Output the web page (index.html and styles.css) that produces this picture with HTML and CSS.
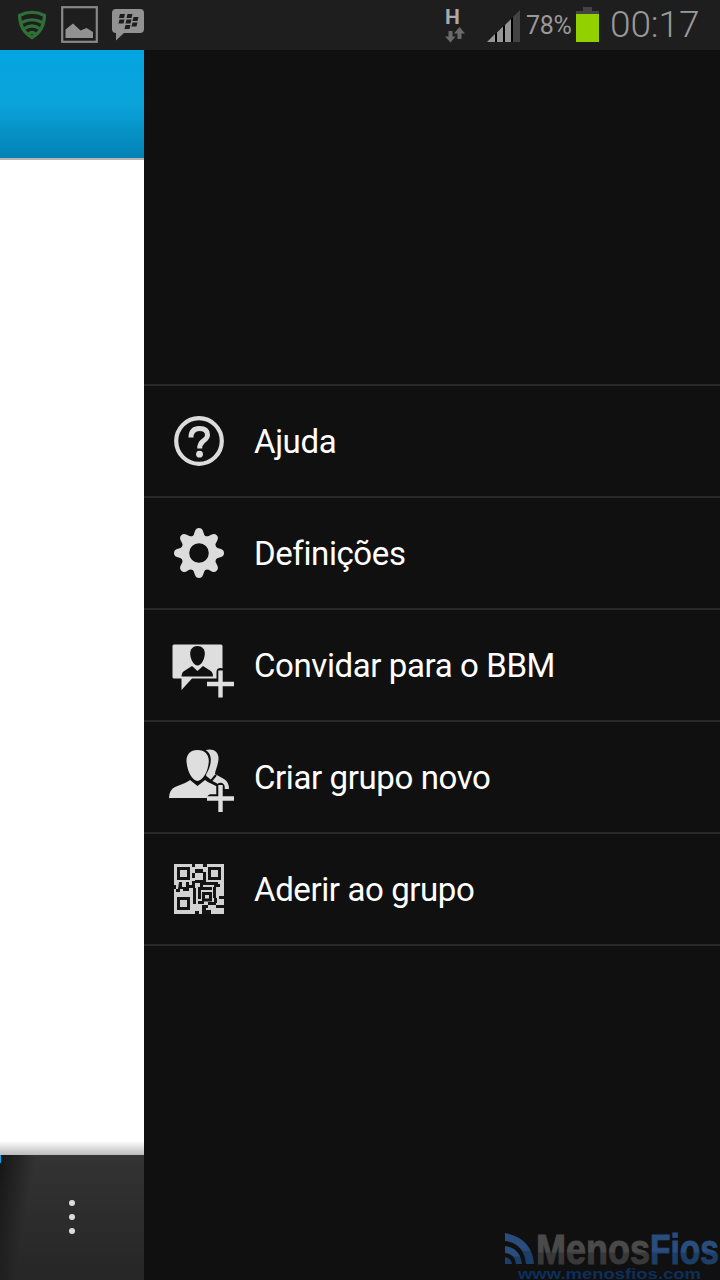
FILE: index.html
```html
<!DOCTYPE html>
<html lang="pt">
<head>
    <meta charset="UTF-8">
    <meta name="viewport" content="width=device-width, initial-scale=1.0">
    <title>BBM</title>
    <link rel="stylesheet" href="styles.css">
</head>
<body>
    <header class="status">
        <svg class="shield" width="30" height="30" viewBox="0 0 30 30" fill="none" stroke="#2f7036" stroke-width="3.200">
            <path d="M2.500 5.500Q15-1 27.500 5.500Q27 21 15 27.500Q3 21 2.500 5.500Z"/>
            <path d="M4.500 12.500Q15 7 25.500 12.500M7.500 18.500Q15 13.500 22.500 18.500M11 24.500Q15 20.500 19 24.500"/>
        </svg>
        <svg class="photo" width="37" height="37" viewBox="0 0 37 37">
            <rect x="1.200" y="1.200" width="34.600" height="34.600" fill="none" stroke="#888" stroke-width="2.200"/>
            <path d="M4.500 32V23.500L12 17.500L19.500 24.500L25.500 22L32 26V32Z" fill="#929292"/>
        </svg>
        <svg class="bbm" width="32" height="32" viewBox="0 0 32 32">
            <path d="M4 0H28Q32 0 32 4V20Q32 24 28 24H12L4 31.500V24Q0 24 0 20V4Q0 0 4 0Z" fill="#929292"/>
            <g fill="#1d1d1d">
                <path d="M8 5h5l-1 4H7zM15.500 5h5l-1 4h-5zM7.500 10.500h5l-1 4h-5zM14.500 10.500h5l-1 4h-5zM13.500 16h5l-1 4h-5zM21.500 8h5l-1 4h-5zM20.500 13.500h5l-1 4h-5z"/>
            </g>
        </svg>

        <div class="network">
            <span>H</span>
            <svg width="20" height="16" viewBox="0 0 20 16" fill="#6a6a6a">
                <path d="M3.500 4H7.500V9.500H10.500L5.500 15.500L0 9.500H3.500Z"/>
                <path d="M12.500 12H16.500V6.500H20L14.500 0L9 6.500H12.500Z"/>
            </svg>
        </div>
        <svg class="signal" width="33" height="32" viewBox="0 0 33 32">
            <path d="M0 32L8 24V32ZM10 32V22.500L16 16.500V32ZM18 32V15L24 9V32Z" fill="#969696"/>
            <path d="M8 24L10 22.500V32H8ZM16 16.500L18 15V32H16ZM24 9L26 7V32H24Z" fill="#000"/>
            <path d="M26 7L33 0V32H26Z" fill="#444"/>
        </svg>
        <span class="percent">78%</span>
        <svg class="battery" width="23" height="35" viewBox="0 0 23 35">
            <path d="M7 0H16V4H23V7H0V4H7Z" fill="#444"/>
            <rect y="7" width="23" height="28" fill="#92d000"/>
        </svg>
        <span class="clock">00:17</span>
    </header>

    <main class="screen">
        <section class="page">
            <div class="title"></div>
            <div class="content"></div>
            <div class="actions">
                <i></i><i></i><i></i>
            </div>
        </section>

        <nav class="drawer">
            <ul class="menu">
                <li>
                    <svg width="70" height="70" viewBox="0 0 70 70">
                        <circle cx="35" cy="35" r="22.800" fill="none" stroke="#dcdcdc" stroke-width="4.200"/>
                        <path d="M27 31.500Q27 22.500 35.500 22.500Q43.500 22.500 43.500 29Q43.500 32 39 35.300Q35.700 38 35.700 42.500" fill="none" stroke="#dcdcdc" stroke-width="5"/>
                        <circle cx="35.500" cy="48.200" r="3.400" fill="#dcdcdc"/>
                    </svg>
                    <span>Ajuda</span>
                </li>
                <li>
                    <svg width="70" height="70" viewBox="0 0 70 70" fill="#dcdcdc">
                        <g transform="translate(35 35)">
                            <path fill-rule="evenodd" d="M-18 0A18 18 0 1 0 18 0A18 18 0 1 0-18 0ZM-9.800 0A9.800 9.800 0 1 1 9.800 0A9.800 9.800 0 1 1-9.800 0Z"/>
                            <g id="teeth">
                                <path id="tooth" d="M-8-15Q-4.500-18-4-22Q-3-25 0-25Q3-25 4-22Q4.500-18 8-15Z"/>
                                <use href="#tooth" transform="rotate(90)"/>
                                <use href="#tooth" transform="rotate(180)"/>
                                <use href="#tooth" transform="rotate(270)"/>
                            </g>
                            <use href="#teeth" transform="rotate(45)"/>
                        </g>
                    </svg>
                    <span>Definições</span>
                </li>
                <li>
                    <svg width="70" height="70" viewBox="0 0 70 70">
                        <path d="M10 14.500H57Q58.500 14.500 58.500 16V48.500H28L17.500 60V48.500H10Q8.500 48.500 8.500 47V16Q8.500 14.500 10 14.500Z" fill="#dedede"/>
                        <path d="M33.500 16C38 16 41 19 40.800 24C40.500 30 37 35.500 33.500 35.500C30 35.500 26.500 30 26.200 24C26 19 29 16 33.500 16Z" fill="#101010"/>
                        <path d="M17.500 46.500Q17.500 42 21 40.500L28 36L33.500 41L39 36L46 40.500Q49 42 49 46.500Z" fill="#101010"/>
                        <path d="M56.500 42V67M47 54H67" stroke="#101010" stroke-width="8" stroke-linecap="round"/>
                        <path d="M56.500 40.500V67.500M43 54H70" stroke="#dedede" stroke-width="4.400"/>
                    </svg>
                    <span>Convidar para o BBM</span>
                </li>
                <li>
                    <svg width="70" height="70" viewBox="0 0 70 70">
                        <g transform="translate(0 -1)">
                            <path d="M42 9C49 7 55 11 54.500 18C54 25 51 30 51 33L60 38Q65 41 65 48H50L40 38V10Z" fill="#dadada"/>
                            <path d="M42 36L47 40L52 34" fill="none" stroke="#101010" stroke-width="2"/>
                            <path d="M34 7.500C41 7 46.500 11 46.800 18C47 26 43 31 42 34L43 37L54 43Q58 46 58 57H4Z" fill="#101010"/>
                            <path d="M33.500 9C41 9 45 14 44.800 20C44.500 31 38 40 33.500 40C29 40 23 31 22.500 20C22.300 14 26 9 33.500 9Z" fill="#dedede"/>
                            <path d="M5 57Q5 49 11 46L21 42Q25 40 26 39L33.500 45L41 39Q43 41 48 43L54 46V57Z" fill="#dedede"/>
                            <path d="M56.500 46V69M47 57.500H67" stroke="#101010" stroke-width="8.500" stroke-linecap="round"/>
                            <path d="M56.500 44V71M43 57.500H70" stroke="#dedede" stroke-width="4.400"/>
                        </g>
                    </svg>
                    <span>Criar grupo novo</span>
                </li>
                <li>
                    <svg width="70" height="70" viewBox="0 0 70 70">
                        <rect x="10" y="10" width="50" height="50" fill="#d2d2d2"/>
                        <g fill="none" stroke="#151515" stroke-width="3">
                            <rect x="14.500" y="14.500" width="10" height="10"/>
                            <rect x="45.500" y="14.500" width="10" height="10"/>
                            <rect x="14.500" y="44.500" width="10" height="10"/>
                            <rect x="39.500" y="39.500" width="7" height="6.500"/>
                        </g>
                        <!-- data modules -->
                        <path fill="#151515" d="M28 10h3v3h-3zM39 10h4v3h-4zM31 15h8v4h-8zM28 19h3v5h-3zM39 18h3v10h12v3H39v5h-3v-7h-5v-3h8zM15 28h3v5h4v-5h3v3h3v-4h3v7h-6v3h-6v-2h-3v3h-4v-3h-3v-4h3v4h2zM29 34h3v16h-3zM34 33h3v12h-3zM36 33h12v3H36zM50 30h6v3h-4v11h-3V33h1zM55 42h5v3h-5zM34 47h6v3h-6zM44 48h8v3h-8zM38 51h6v3h-6zM38 53h4v7h-4zM42 56h5v4h-5zM52 51h8v3h-8zM50 44h3v5h-3zM31 57h4v3h-4z"/>
                    </svg>
                    <span>Aderir ao grupo</span>
                </li>
            </ul>
        </nav>
    </main>

    <!-- watermark over the drawer -->
    <svg class="watermark" width="216" height="52" viewBox="0 0 216 52">
        <defs>
            <linearGradient id="grey" x2="0" y2="1">
                <stop offset="0.550" stop-color="#4a4a4a"/>
                <stop offset="0.600" stop-color="#393939"/>
            </linearGradient>
            <linearGradient id="blue" x2="0" y2="1">
                <stop offset="0.550" stop-color="#294d7c"/>
                <stop offset="0.600" stop-color="#1d3e67"/>
            </linearGradient>
        </defs>
        <path d="M1 5Q28 10 30 36H22Q20 15 1 13Z" fill="url(#blue)"/>
        <path d="M1 18Q16 20 18 36H12Q11 26 1 25Z" fill="url(#blue)"/>
        <path d="M1 29Q7 30 8 36H1Z" fill="#1d3e67"/>
        <text class="brand" x="32" y="35.500" textLength="114" lengthAdjust="spacingAndGlyphs" fill="url(#grey)" stroke="url(#grey)">Menos</text>
        <text class="brand" x="146" y="35.500" textLength="69" lengthAdjust="spacingAndGlyphs" fill="url(#blue)" stroke="url(#blue)">Fios</text>
        <text class="url" x="14" y="50.500" textLength="183" lengthAdjust="spacingAndGlyphs" fill="#0d2f5c">www.menosfios.com</text>
    </svg>
</body>
</html>
```
FILE: styles.css
```css
* {
    box-sizing: border-box;
}

body {
    position: relative;
    display: flex;
    flex-direction: column;
    margin: 0;
    width: 720px;
    height: 1280px;
    overflow: hidden;
    background-color: #101010;
    font-family: Roboto, "Liberation Sans", sans-serif;
}

.status {
    display: flex;
    align-items: center;
    height: 50px;
    padding-left: 17px;
    background-color: #1e1e1e;
    color: #999;
    line-height: 50px;
}

.status svg {
    flex: none;
}

.shield {
    margin-top: -1px;
}

.photo {
    margin: -1px 0 0 14px;
}

.bbm {
    margin-left: 14px;
}

.network {
    display: flex;
    flex-direction: column;
    margin-left: 301px;
    width: 20px;
    font-size: 21px;
    font-weight: bold;
    line-height: 19px;
    color: #aaa;
}

.signal {
    margin: 1px 0 0 22px;
}

.percent {
    margin: 2px 0 0 6px;
    width: 50px;
    font-size: 25px;
    letter-spacing: -0.3px;
}

.battery {
    margin-top: -1px;
}

.clock {
    margin-left: 11px;
    font-size: 37px;
    font-weight: 300;
    letter-spacing: -0.1px;
}

.screen {
    display: flex;
    flex: 1;
}

.page {
    display: flex;
    flex-direction: column;
    width: 144px;
    background-color: #fff;
}

.title {
    height: 110px;
    border-bottom: 2px solid #b5b5b5;
    background: linear-gradient(#03a5e1, #0ba3da 50%, #0282b4);
}

.content {
    flex: 1;
    background: linear-gradient(#fff, #bbb) bottom / 100% 14px no-repeat;
}

.actions {
    display: flex;
    flex-direction: column;
    align-items: center;
    gap: 8px;
    height: 125px;
    padding-top: 45px;
    background:
        linear-gradient(#00a5e3, #00a5e3) 0 0 / 1px 8px no-repeat,
        linear-gradient(100deg, #151515, transparent 22%),
        linear-gradient(#333, #262626);
}

.actions i {
    width: 6px;
    height: 6px;
    border-radius: 50%;
    background-color: #ddd;
}

.drawer {
    flex: 1;
    padding-top: 334px;
}

.menu {
    margin: 0;
    padding: 0;
    border-top: 2px solid #292929;
    list-style: none;
}

.menu li {
    display: flex;
    align-items: center;
    height: 112px;
    padding-left: 20px;
    border-bottom: 2px solid #292929;
    color: #fff;
    font-size: 33px;
    letter-spacing: -0.4px;
}

.menu svg {
    flex: none;
    margin-right: 20px;
    overflow: visible;
}

.watermark {
    position: absolute;
    left: 504px;
    top: 1228px;
}

.brand {
    font: bold 42px "Liberation Sans", sans-serif;
}

.url {
    font: bold 14px "Liberation Sans", sans-serif;
}
```
